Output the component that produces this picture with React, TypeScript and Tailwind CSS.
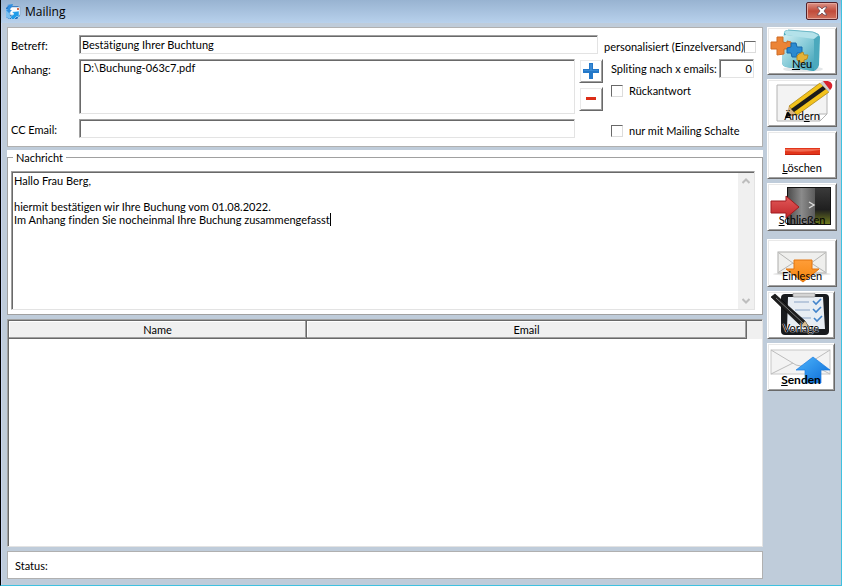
import { useState } from 'react';
import type { ReactNode } from 'react';
import { clsx } from 'clsx';

const sunken =
  'border border-t-[#a0a0a0] border-l-[#a0a0a0] border-r-[#e3e3e3] border-b-[#e3e3e3] bg-white shadow-[inset_1px_1px_0_#696969]';
const raised =
  'border border-t-white border-l-white border-r-[#696969] border-b-[#696969] bg-white shadow-[inset_1px_1px_0_#e9e9e9,inset_-1px_-1px_0_#a0a0a0]';

const message = `Hallo Frau Berg,

hiermit bestätigen wir Ihre Buchung vom 01.08.2022.
Im Anhang finden Sie nocheinmal Ihre Buchung zusammengefasst`;

function NewIcon() {
  return (
    <>
      <defs>
        <linearGradient id="cube" x1="0" y1="0" x2="1" y2="1">
          <stop offset="0" stopColor="#d3eff3" />
          <stop offset="0.5" stopColor="#86cbd8" />
          <stop offset="1" stopColor="#3c9fb5" />
        </linearGradient>
      </defs>
      <ellipse cx="34" cy="40" rx="20" ry="3" fill="#e3e6e8" />
      <path d="M15 3 Q16 1 19 1 L44 3 Q50 4 51 8 L50 36 Q49 40 45 42 L17 38 Q13 37 13 33Z" fill="#4ba9bd" />
      <path d="M13 8 Q14 6 17 6 L41 8 Q45 9 45 12 L45 42 L17 38 Q13 37 13 33Z" fill="url(#cube)" />
      <path d="M15 3 L19 1 L44 3 L50 6 L45 10 L17 6Z" fill="#b4e2ea" />
      <path d="M19 1 L44 3 L50 6" fill="none" stroke="#6fb9c8" />
      <path
        d="M8 8 L14 8 L14 13 L18 14 L18 12 L22 13 L23 20 L18 20 L15 20 L15 25 L8 26 L8 20 L2 20 L2 13 L8 13Z"
        fill="#ec8436"
        stroke="#cf6c24"
      />
      <path
        d="M22 14 L27 14 L28 18 L33 18 L33 24 L28 24 L28 28 L23 28 L22 24 L18 24 L18 19 L22 18Z"
        fill="#2a8ad0"
        stroke="#1668aa"
      />
      <path d="M30 25 L34 23 L35 26 L39 26 L38 30 L35 31 L35 34 L31 33 L28 31 L28 27Z" fill="#e3b339" stroke="#b88a21" />
    </>
  );
}

function EditIcon() {
  return (
    <>
      <path d="M8 4 H58 V33 L51 40 H8Z" fill="#f3f3f3" stroke="#b4b4b4" />
      <path d="M51 40 L50 33 L58 33Z" fill="#fff" stroke="#b4b4b4" />
      <path d="M16 37 L20 25 L28 34Z" fill="#d9b380" />
      <path d="M16 37 L18 31 L23 34Z" fill="#111" />
      <path d="M20 25 L51 2 L60 11 L28 34Z" fill="#f2c21c" stroke="#a27d0b" strokeWidth="0.7" />
      <path d="M22 28 L54 5 L57 8 L25 31Z" fill="#1b1b1b" />
      <path d="M51 2 L54 0 L62 8 L60 11Z" fill="#d0d0d0" />
      <path d="M54 0 Q61 -1 63 3 Q64 7 61 9Z" fill="#d8222c" />
    </>
  );
}

function DeleteIcon() {
  return (
    <>
      <rect x="16" y="15" width="35" height="7" fill="#e2351b" />
      <path d="M16 16 H51 V17 Q36 20 16 18Z" fill="#f0694f" />
      <rect x="16" y="21" width="35" height="1" fill="#c3210f" />
    </>
  );
}

function CloseIcon() {
  return (
    <>
      <defs>
        <linearGradient id="door" x1="0" y1="0" x2="1" y2="0">
          <stop offset="0" stopColor="#4d4d4d" />
          <stop offset="0.5" stopColor="#8b8b8b" />
          <stop offset="1" stopColor="#5c5c5c" />
        </linearGradient>
        <linearGradient id="exit" x1="0" y1="0" x2="0" y2="1">
          <stop offset="0" stopColor="#e25a5a" />
          <stop offset="1" stopColor="#c0262a" />
        </linearGradient>
        <linearGradient id="room" x1="0" y1="0" x2="0" y2="1">
          <stop offset="0" stopColor="#3a3a3a" />
          <stop offset="0.6" stopColor="#1f1f1f" />
          <stop offset="1" stopColor="#6f7a1e" />
        </linearGradient>
      </defs>
      <rect x="18" y="2" width="44" height="38" fill="#111" />
      <rect x="46" y="3" width="15" height="36" fill="url(#room)" />
      <path d="M19 3 H46 V39 H19Z" fill="url(#door)" />
      <path d="M40 17 L45 20 L40 23" fill="none" stroke="#dcdcdc" strokeWidth="1.4" />
      <path d="M2 16 H17 V11 L30 22 L17 33 V28 H2Z" fill="url(#exit)" stroke="#a01b1e" />
    </>
  );
}

function ImportIcon() {
  return (
    <>
      <defs>
        <linearGradient id="down" x1="0" y1="0" x2="0" y2="1">
          <stop offset="0" stopColor="#ff9d38" />
          <stop offset="1" stopColor="#f5860f" />
        </linearGradient>
      </defs>
      <ellipse cx="33" cy="33" rx="29" ry="2" fill="#e6e6e6" />
      <rect x="9" y="11" width="48" height="21" fill="#efefed" stroke="#adadab" />
      <path d="M10 12 L28 25 Q33 28 38 25 L56 12 M10 31 L24 22 M56 31 L42 22" fill="none" stroke="#b5b5b3" />
      <path d="M25 19 H43 V28 H50 L34 41 L17 28 H25Z" fill="url(#down)" stroke="#e2740e" />
    </>
  );
}

function TemplateIcon() {
  return (
    <>
      <rect x="12" y="1" width="48" height="41" rx="4" fill="#191b1e" />
      <path d="M19 4 H54 L56 36 H18Z" fill="#e8edf3" />
      <rect x="24" y="0" width="22" height="4" rx="1" fill="#d5d5d5" stroke="#8b8b8b" strokeWidth="0.7" />
      <path d="M25 9 H40 M26 17 H41 M28 25 H42" stroke="#b9c8dc" strokeWidth="2" />
      <path
        d="M44 8 L47 11 L52 6 M44 16 L47 19 L52 14 M45 25 L48 28 L53 23"
        fill="none"
        stroke="#4384cb"
        strokeWidth="1.6"
      />
      <path d="M2 4 L6 1 L36 28 L41 36 L32 33Z" fill="#1d1d1d" stroke="#000" strokeWidth="0.6" />
      <path d="M7 5 L34 30" stroke="#7a7a7a" />
      <path d="M32 33 L36 28 L41 36Z" fill="#d9bd92" />
      <path d="M38 34 L39 32 L41 36Z" fill="#111" />
    </>
  );
}

function SendIcon() {
  return (
    <>
      <defs>
        <linearGradient id="up" x1="0" y1="0" x2="1" y2="1">
          <stop offset="0" stopColor="#4db4fb" />
          <stop offset="1" stopColor="#0a6ad6" />
        </linearGradient>
      </defs>
      <rect x="2" y="5" width="59" height="24" fill="#f3f3f3" stroke="#c8c8c8" />
      <path d="M2 5 L27 20 Q32 22 37 20 L61 5 M2 29 L24 18 M61 29 L40 18" fill="none" stroke="#bdbdbd" />
      <path d="M44 12 L61 25 H52 V38 H36 V25 H27Z" fill="url(#up)" stroke="#1b7be0" strokeWidth="0.7" />
    </>
  );
}

const actions: { icon: () => ReactNode; label: ReactNode; id: string; className?: string }[] = [
  { id: 'new', icon: NewIcon, label: <><u>N</u>eu</> },
  { id: 'edit', icon: EditIcon, label: <>Änd<u>e</u>rn</> },
  { id: 'delete', icon: DeleteIcon, label: <><u>L</u>öschen</> },
  { id: 'close', icon: CloseIcon, label: <><u>S</u>chließen</> },
  { id: 'import', icon: ImportIcon, label: 'Einlesen', className: 'mt-1' },
  {
    id: 'template',
    icon: TemplateIcon,
    label: 'Vorlage',
    className: 'mr-0.5 [text-shadow:0_0_1px_#fff,0_0_1px_#fff,0_0_1px_#fff]',
  },
  { id: 'send', icon: SendIcon, label: <><u>S</u>enden</>, className: 'mr-0.5 text-xs leading-[13px] font-bold' },
];

function Check({ id }: { id: string }) {
  return (
    <input
      id={id}
      type="checkbox"
      className="h-3 w-3 shrink-0 appearance-none border border-t-[#696969] border-l-[#696969] border-r-[#dcdcdc] border-b-[#dcdcdc] bg-white checked:bg-[#3c7fc4]"
    />
  );
}

function TitleBar() {
  return (
    <header className="flex h-[23px] items-center bg-linear-to-b from-[#98b3d1] to-[#b8d1ec] pr-[3px] pl-1">
      <svg viewBox="0 0 16 16" className="h-4 w-4">
        <path d="M1 4 L3 2 H13 L15 4 V12 L12 15 H4 L1 13Z" fill="#2476c4" />
        <path d="M1 5 L5 6 L5 15 L1 13Z" fill="#7cc0f0" />
        <rect x="5" y="3" width="10" height="8" fill="#fbfdff" stroke="#7f9dbc" strokeWidth="0.6" />
        <rect x="12" y="4" width="2" height="2" fill="#d86a4a" />
        <path d="M2 1 L8 0 L7 3 Q5 4 5 6 L7 6 L4 9 L1 6 H3 Q2 3 4 2Z" fill="#2f8fe0" />
        <path d="M7 8 L14 7 L14 14 L12 12 L8 16 L5 13 L9 10Z" fill="#1f9be8" stroke="#eaf5ff" strokeWidth="0.5" />
      </svg>
      <h1 className="ml-1 flex-1 font-['Open_Sans',sans-serif] text-xs text-black">Mailing</h1>
      <button
        type="button"
        aria-label="Schließen"
        className="mb-px flex h-[18px] w-8 items-center justify-center rounded-xs border border-[#54222a] bg-linear-to-b from-[#dc9287] via-[#c04a3a] via-50% to-[#d0705c] shadow-[inset_0_0_0_1px_#e5a79c]"
      >
        <svg viewBox="0 0 12 10" className="h-2.5 w-3">
          <path
            d="M1 1 H4 L6 3 L8 1 H11 L8 5 L11 9 H8 L6 7 L4 9 H1 L4 5Z"
            fill="#fff"
            stroke="#6b4a55"
            strokeWidth="0.8"
          />
        </svg>
      </button>
    </header>
  );
}

function MailForm() {
  return (
    <section className="flex flex-col border border-[#b0b0b0] bg-white pt-[7px] pr-1.5 pb-2 pl-[3px]">
      <div className="flex">
        <label htmlFor="subject" className="w-[68px] pt-1">Betreff:</label>
        <input
          id="subject"
          defaultValue="Bestätigung Ihrer Buchtung"
          className={clsx(sunken, 'h-[19px] min-w-0 flex-1 px-0.5')}
        />
        <div className="ml-1.5 flex w-[152px] items-center justify-between pt-1">
          <label htmlFor="personal" className="whitespace-nowrap">personalisiert (Einzelversand)</label>
          <Check id="personal" />
        </div>
      </div>

      <div className="mt-[5px] flex">
        <label htmlFor="attachments" className="w-[68px] pt-1">Anhang:</label>
        <textarea
          id="attachments"
          readOnly
          defaultValue="D:\Buchung-063c7.pdf"
          className={clsx(sunken, 'h-[55px] min-w-0 flex-1 resize-none px-[3px] py-px')}
        />
        <div className="ml-1 flex flex-col gap-1">
          <button type="button" aria-label="Anhang hinzufügen" className={clsx(raised, 'flex h-6 w-6 items-center justify-center')}>
            <svg viewBox="0 0 20 20" className="h-5 w-5">
              <path d="M8 2 H12 V8 H18 V12 H12 V18 H8 V12 H2 V8 H8Z" fill="#2478c8" />
              <path d="M9 3 H11 V9 H17 V10 H3 V9 H9Z" fill="#3a8ad4" />
            </svg>
          </button>
          <button type="button" aria-label="Anhang entfernen" className={clsx(raised, 'flex h-6 w-6 items-center justify-center')}>
            <svg viewBox="0 0 20 20" className="h-5 w-5">
              <rect x="5" y="8" width="10" height="3" fill="#dc2d17" />
            </svg>
          </button>
        </div>
        <div className="ml-2 flex w-[145px] flex-col">
          <div className="flex items-center justify-between">
            <label htmlFor="split" className="whitespace-nowrap">Spliting nach x emails:</label>
            <input
              id="split"
              defaultValue="0"
              className={clsx(sunken, 'mr-0.5 h-[19px] w-[35px] px-px text-right')}
            />
          </div>
          <div className="mt-1.5 flex items-center gap-1.5">
            <Check id="reply" />
            <label htmlFor="reply">Rückantwort</label>
          </div>
        </div>
      </div>

      <div className="mt-[5px] flex">
        <label htmlFor="cc" className="w-[68px] pt-1">CC Email:</label>
        <input id="cc" className={clsx(sunken, 'h-[19px] min-w-0 flex-1 px-0.5')} />
        <div className="ml-9 flex w-[145px] items-center gap-1.5 pt-1">
          <Check id="switch" />
          <label htmlFor="switch" className="whitespace-nowrap">nur mit Mailing Schalte</label>
        </div>
      </div>
    </section>
  );
}

function MessageBox() {
  const [text, setText] = useState(message);

  return (
    <section className="mt-[3px] bg-white">
      <fieldset className="border border-[#a0a0a0] px-[3px] pb-1">
        <legend className="ml-0.5 px-[3px] leading-[15px]">
          <label htmlFor="message">Nachricht</label>
        </legend>
        <div className={clsx(sunken, 'relative mt-1.5 mr-1 flex h-[139px] pt-px pl-px')}>
          <textarea
            id="message"
            value={text}
            onChange={(e) => setText(e.target.value)}
            className="min-w-0 flex-1 resize-none overflow-hidden px-px pt-px outline-none"
          />
          {/* Caret at the end of the last line */}
          {text === message && <span className="absolute top-[41px] left-[318px] h-[13px] w-px bg-black" />}
          <div className="flex w-4 flex-col justify-between bg-[#f0f0f0] text-[#bdbdbd]">
            <button type="button" aria-label="Nach oben" className="flex h-4 items-center justify-center">
              <svg viewBox="0 0 8 6" className="h-1.5 w-2">
                <path d="M0.500 5 L4 1.500 L7.500 5" fill="none" stroke="currentColor" strokeWidth="2" />
              </svg>
            </button>
            <button type="button" aria-label="Nach unten" className="flex h-4 items-center justify-center">
              <svg viewBox="0 0 8 6" className="h-1.5 w-2">
                <path d="M0.500 1 L4 4.500 L7.500 1" fill="none" stroke="currentColor" strokeWidth="2" />
              </svg>
            </button>
          </div>
        </div>
      </fieldset>
    </section>
  );
}

function RecipientTable() {
  const cell =
    'h-[18px] border-r border-b border-[#696969] bg-[#f0f0f0] p-0 text-center font-normal shadow-[inset_-1px_-1px_0_#a0a0a0,inset_1px_1px_0_#fff]';

  return (
    <section className={clsx(sunken, 'mt-1 flex-1 pt-px pl-px')}>
      <table className="w-full table-fixed border-separate border-spacing-0">
        <thead>
          <tr>
            <th className={clsx(cell, 'w-[39.6%]')}>Name</th>
            <th className={cell}>Email</th>
            <th aria-hidden="true" className="w-[15px] bg-[#f0f0f0] p-0" />
          </tr>
        </thead>
        <tbody />
      </table>
    </section>
  );
}

export default function App() {
  return (
    <div className="flex min-h-screen flex-col border-r border-b border-l border-r-[#3fc1e0] border-b-[#3fc1e0] border-l-black bg-[#bfccda] font-[Lato,'Liberation_Sans',sans-serif] text-[11px] leading-[13px] text-black [font-variant-ligatures:none]">
      <TitleBar />
      <div className="flex flex-1 border-l border-[#c9d6f2] pt-1 pr-1 pb-1.5 pl-[5px]">
        <main className="flex min-w-0 flex-1 flex-col">
          <MailForm />
          <MessageBox />
          <RecipientTable />
          <footer className="mt-1 flex h-7 items-center border border-[#b0b0b0] bg-white px-[7px]">
            Status:
          </footer>
        </main>

        <aside className="ml-1 flex w-[70px] flex-col gap-1">
          {actions.map((action) => (
            <button
              key={action.id}
              type="button"
              className={clsx(raised, 'relative flex h-12 items-center overflow-hidden pl-px', action.className)}
            >
              <svg viewBox="0 0 66 44" className="h-11 w-[66px] shrink-0">
                <action.icon />
              </svg>
              <span className="absolute inset-x-0 bottom-1 text-center">{action.label}</span>
            </button>
          ))}
        </aside>
      </div>
    </div>
  );
}
